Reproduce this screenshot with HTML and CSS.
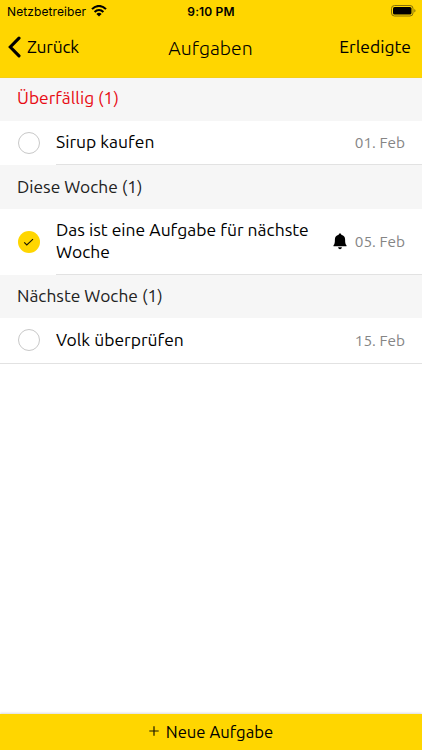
FILE: index.html
```html
<!DOCTYPE html>
<html lang="de">
<head>
<meta charset="utf-8">
<title>Aufgaben</title>
<link rel="stylesheet" href="styles.css">
</head>
<body>
<div class="app">
  <header class="header">
    <div class="status">
      <div class="carrier"><span>Netzbetreiber</span>
        <svg class="wifi" viewBox="0 0 16 12"><g fill="none" stroke="#000" stroke-width="2"><path d="M1 4.2C5-.2 11-.2 15 4.2"/><path d="M3.6 7C6.2 4.3 9.8 4.3 12.4 7"/></g><path d="M5.4 8.9Q8 6.7 10.6 8.9L8 11.6Z"/></svg>
      </div>
      <span class="time">9:10 PM</span>
      <svg class="battery" viewBox="0 0 25 12"><rect x=".5" y=".5" width="21.5" height="10.5" rx="3" fill="none" stroke="#857009"/><rect x="2" y="2" width="18.5" height="7.5" rx="1.6"/><path d="M23.3 4v3.6q1.2-.5 1.2-1.8T23.3 4Z" fill="#857009"/></svg>
    </div>
    <nav class="nav">
      <div class="back"><svg class="chevron" viewBox="0 0 13 22"><path d="M11 2.2 2.3 11 11 19.800" fill="none" stroke="#000" stroke-width="3.100" stroke-linecap="round" stroke-linejoin="miter"/></svg><span class="back-label">Zurück</span></div>
      <h1 class="title"><span>Aufgaben</span></h1>
      <div class="done"><span>Erledigte</span></div>
    </nav>
  </header>
  <main class="list">
    <h2 class="section overdue"><span>Überfällig (1)</span></h2>
    <div class="row">
      <span class="check"></span>
      <div class="body"><span class="text">Sirup kaufen</span><span class="date">01. Feb</span></div>
    </div>
    <h2 class="section"><span>Diese Woche (1)</span></h2>
    <div class="row tall">
      <span class="check checked"><svg viewBox="0 0 22 22"><path d="m6.200 11.300 2.600 2.600 6.200-5.700" fill="none" stroke="#1b1800" stroke-width="1.150"/></svg></span>
      <div class="body"><span class="text">Das ist eine Aufgabe für nächste<br>Woche</span>
        <svg class="bell" viewBox="0 0 14 17"><path d="M7 .5c.8 0 1.300.5 1.300 1.200C11 2.300 12.100 4 12.100 6.500c0 3.700.3 4.700 1.400 5.700v1H.5v-1c1.100-1 1.400-2 1.400-5.700 0-2.500 1.100-4.200 3.800-4.800C5.700 1 6.200.5 7 .5ZM5 14.300h4Q8.500 16.200 7 16.200T5 14.300Z"/></svg>
        <span class="date">05. Feb</span></div>
    </div>
    <h2 class="section next"><span>Nächste Woche (1)</span></h2>
    <div class="row last">
      <span class="check"></span>
      <div class="body"><span class="text">Volk überprüfen</span><span class="date">15. Feb</span></div>
    </div>
  </main>
  <footer class="add"><svg class="plus" viewBox="0 0 10 10"><path d="M5 .3v9.400M.3 5h9.400" stroke="#1b1800" stroke-width="1.200"/></svg><span>Neue Aufgabe</span></footer>
</div>
</body>
</html>
```
FILE: styles.css
```css
* { box-sizing: border-box; }
body { margin: 0; font-family: Ubuntu, "Noto Sans", sans-serif; font-size: 17.500px; color: #000; background: #fff; }
h1, h2 { margin: 0; font-weight: 400; }
svg { display: block; flex: none; }
.app { height: 750px; display: flex; flex-direction: column; overflow: hidden; }
.header { height: 78px; background: #ffd600; border-bottom: 1px solid #f5cf16; }
.status { height: 22px; display: grid; grid-template-columns: 1fr auto 1fr; align-items: center; padding: 0 7px; font-family: Inter, sans-serif; font-size: 12px; }
.carrier { display: flex; gap: 5px; align-items: center; letter-spacing: .1px; }
.wifi { width: 16px; height: 12px; margin-top: -1px; }
.time { font-weight: 600; letter-spacing: .15px; }
.battery { width: 25px; height: 12px; justify-self: end; margin: -1px -1px 0 0; }
.nav { height: 50px; display: grid; grid-template-columns: 1fr auto 1fr; align-items: center; padding: 0 11px 0 8px; }
.back { display: flex; align-items: center; gap: 6px; letter-spacing: -.25px; }
.back-label { line-height: 24px; }
.chevron { width: 13px; height: 22px; }
.title { font-size: 19.400px; font-weight: 300; line-height: 24px; padding: 2px 0 0 2px; }
.done { text-align: right; line-height: 24px; }
.list { flex: 1; }
.section { height: 43.500px; padding-left: 17px; background: #f6f6f6; color: #222; font-size: 17.400px; line-height: 43px; }
.overdue { height: 42.500px; color: #e80a12; line-height: 40px; }
.next { line-height: 42px; }
.row { height: 44.500px; display: flex; align-items: center; padding-left: 18px; }
.tall { height: 66px; }
.check { width: 22px; height: 22px; flex: none; border: 1px solid #c8c8c8; border-radius: 50%; margin-right: 16px; }
.checked { border: 0; background: #ffd600; }
.body { flex: 1; height: 100%; display: flex; align-items: center; padding-right: 17px; border-bottom: 1px solid #e2e2e2; }
.text { flex: 1; line-height: 22px; white-space: nowrap; }
.date { color: #858585; font-size: 15.400px; }
.bell { width: 14px; height: 17px; margin-right: 8px; }
.last { border-bottom: 1px solid #e2e2e2; height: 45.500px; }
.last .body { border: 0; }
.add { height: 36px; padding-bottom: 2px; background: #ffd600; box-shadow: 0 -1px 2px #ddd; display: flex; align-items: center; justify-content: center; gap: 7px; font-size: 16.700px; }
.plus { width: 10px; height: 10px; }
```
